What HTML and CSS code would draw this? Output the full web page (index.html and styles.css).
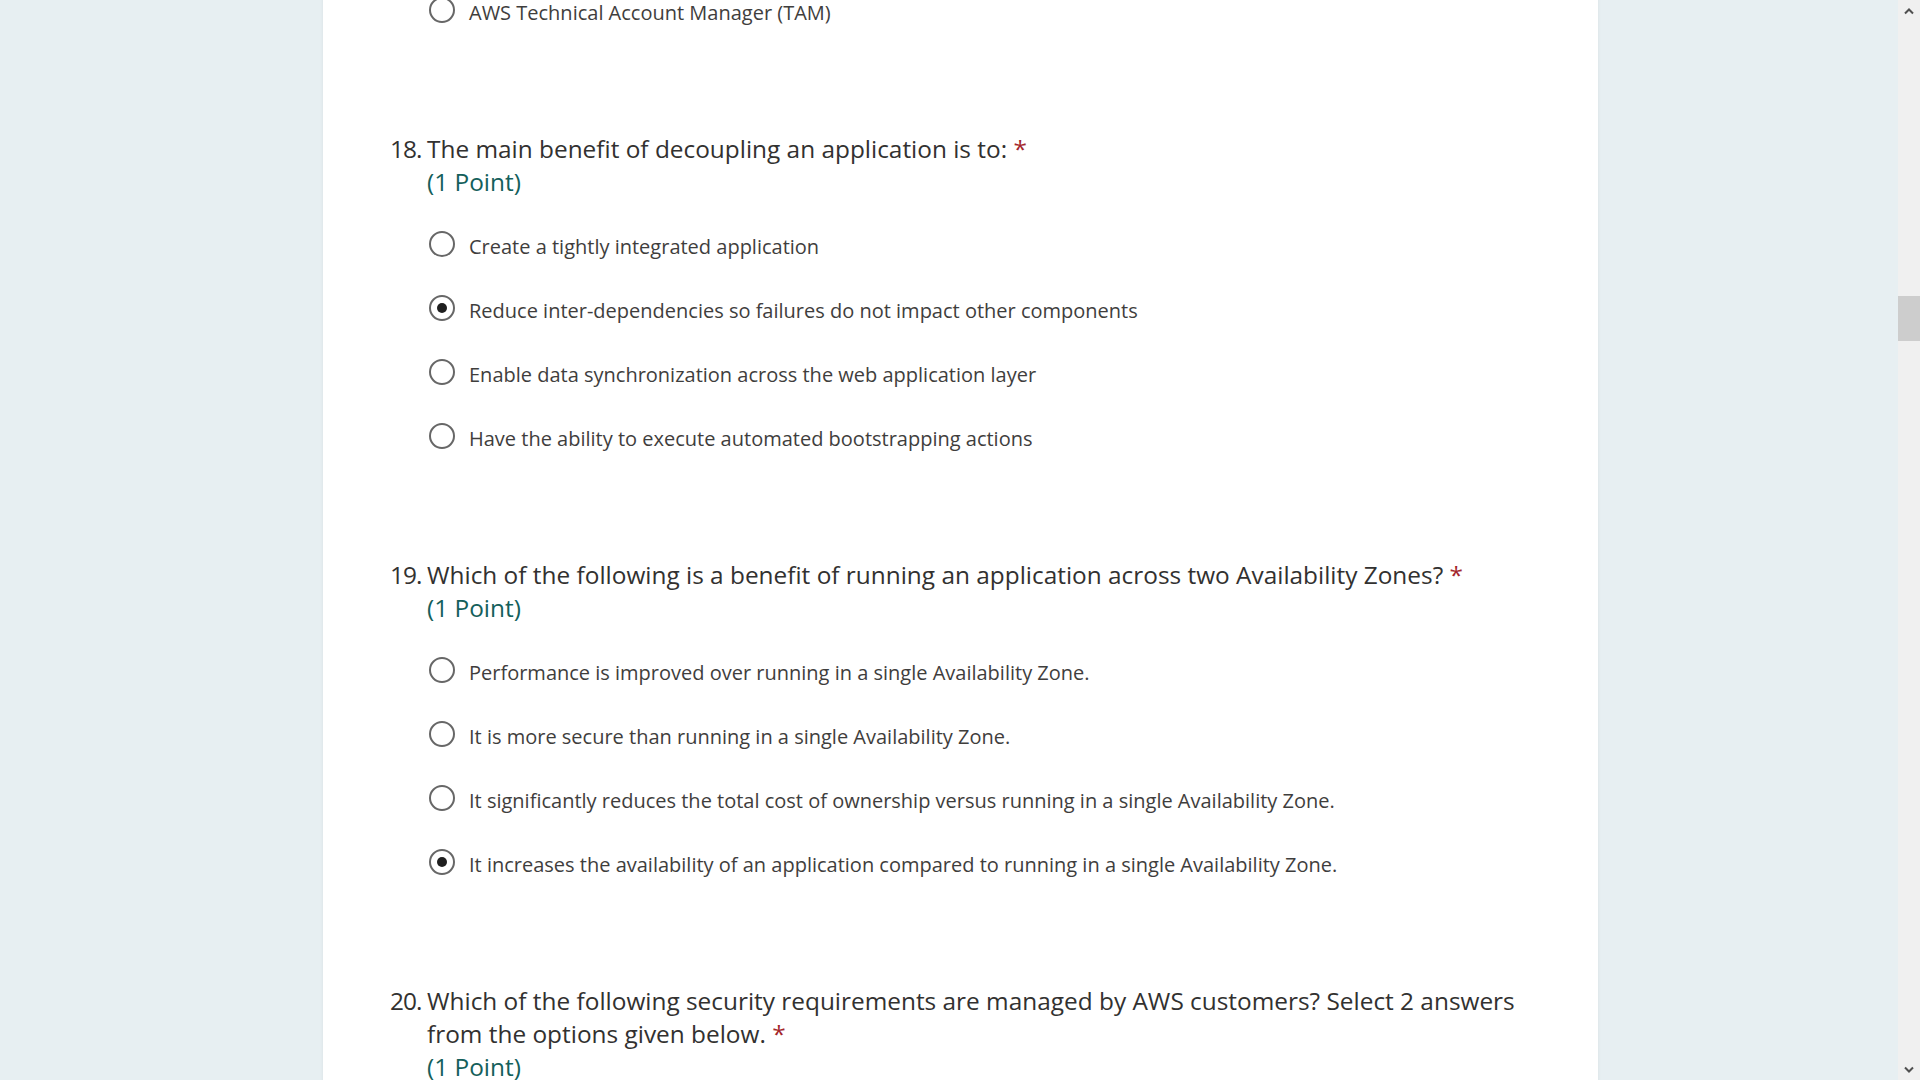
FILE: index.html
```html
<!DOCTYPE html>
<html lang="en">
<head>
<meta charset="utf-8">
<title>AWS Quiz</title>
<link rel="stylesheet" href="styles.css">
</head>
<body>
<div class="viewport">
  <main class="page">
    <section class="card">
      <div class="question partial">
        <ul class="options">
          <li class="option"><span class="radio"></span><span class="label">AWS Technical Account Manager (TAM)</span></li>
        </ul>
      </div>

      <div class="question">
        <div class="title-row">
          <span class="num">18.</span>
          <div class="title-body">
            <div class="title">The main benefit of decoupling an application is to: <span class="req">*</span></div>
            <div class="points">(1 Point)</div>
          </div>
        </div>
        <ul class="options">
          <li class="option"><span class="radio"></span><span class="label">Create a tightly integrated application</span></li>
          <li class="option"><span class="radio checked"></span><span class="label">Reduce inter-dependencies so failures do not impact other components</span></li>
          <li class="option"><span class="radio"></span><span class="label">Enable data synchronization across the web application layer</span></li>
          <li class="option"><span class="radio"></span><span class="label">Have the ability to execute automated bootstrapping actions</span></li>
        </ul>
      </div>

      <div class="question">
        <div class="title-row">
          <span class="num">19.</span>
          <div class="title-body">
            <div class="title">Which of the following is a benefit of running an application across two Availability Zones? <span class="req">*</span></div>
            <div class="points">(1 Point)</div>
          </div>
        </div>
        <ul class="options">
          <li class="option"><span class="radio"></span><span class="label">Performance is improved over running in a single Availability Zone.</span></li>
          <li class="option"><span class="radio"></span><span class="label">It is more secure than running in a single Availability Zone.</span></li>
          <li class="option"><span class="radio"></span><span class="label">It significantly reduces the total cost of ownership versus running in a single Availability Zone.</span></li>
          <li class="option"><span class="radio checked"></span><span class="label">It increases the availability of an application compared to running in a single Availability Zone.</span></li>
        </ul>
      </div>

      <div class="question">
        <div class="title-row">
          <span class="num">20.</span>
          <div class="title-body">
            <div class="title">Which of the following security requirements are managed by AWS customers? Select 2 answers from the options given below. <span class="req">*</span></div>
            <div class="points">(1 Point)</div>
          </div>
        </div>
      </div>
    </section>
  </main>
  <aside class="scrollbar">
    <div class="sb-arrow">
      <svg width="10" height="7" viewBox="0 0 10 7"><path d="M1 5.5 L5 1.5 L9 5.5" fill="none" stroke="#505050" stroke-width="2"/></svg>
    </div>
    <div class="sb-track"><div class="sb-thumb"></div></div>
    <div class="sb-arrow">
      <svg width="10" height="7" viewBox="0 0 10 7"><path d="M1 1.5 L5 5.5 L9 1.5" fill="none" stroke="#505050" stroke-width="2"/></svg>
    </div>
  </aside>
</div>
</body>
</html>
```

FILE: styles.css
```css
* { box-sizing: border-box; }
html, body { margin: 0; padding: 0; }
body {
  background: #e7eff2;
  font-family: "Open Sans", "Noto Sans", "Liberation Sans", sans-serif;
  color: #323130;
  overflow: hidden;
}
.viewport {
  display: flex;
  height: 1080px;
}
.page {
  flex: 1;
  overflow: hidden;
  padding-left: 323px;
}
.card {
  width: 1275px;
  min-height: 1200px;
  background: #ffffff;
  box-shadow: 0 0 4px rgba(0, 0, 0, 0.06);
  padding: 0 56px 0 67px;
  margin-top: -20px;
}
.question { margin-bottom: 88px; }
.title-row {
  display: flex;
  align-items: flex-start;
}
.num {
  width: 37px;
  flex: none;
  font-size: 24.4px;
  line-height: 33px;
  letter-spacing: -0.9px;
  white-space: nowrap;
}
.title-body { flex: 1; }
.title {
  font-size: 24.4px;
  line-height: 33px;
  color: #323130;
}
.req { color: #a4262c; }
.points {
  font-size: 24.4px;
  line-height: 33px;
  color: #14605b;
}
.options {
  list-style: none;
  margin: 16px 0 0 39px;
  padding: 0;
}
.question.partial .options { margin-top: 0; }
.option {
  display: flex;
  align-items: center;
  height: 64px;
  font-size: 20px;
  color: #3f3e3d;
}
.radio {
  flex: none;
  width: 26px;
  height: 26px;
  border: 2.3px solid #676767;
  border-radius: 50%;
  margin-right: 14px;
  margin-top: -4px;
  display: flex;
  align-items: center;
  justify-content: center;
}
.radio.checked::after {
  content: "";
  width: 10px;
  height: 10px;
  border-radius: 50%;
  background: #1f1f1f;
}
.scrollbar {
  width: 22px;
  flex: none;
  background: #f0f0f0;
  display: flex;
  flex-direction: column;
}
.sb-arrow {
  height: 22px;
  display: flex;
  align-items: center;
  justify-content: center;
}
.sb-track {
  flex: 1;
}
.sb-thumb {
  margin-top: 274px;
  height: 45px;
  background: #cdcdcd;
}
```
